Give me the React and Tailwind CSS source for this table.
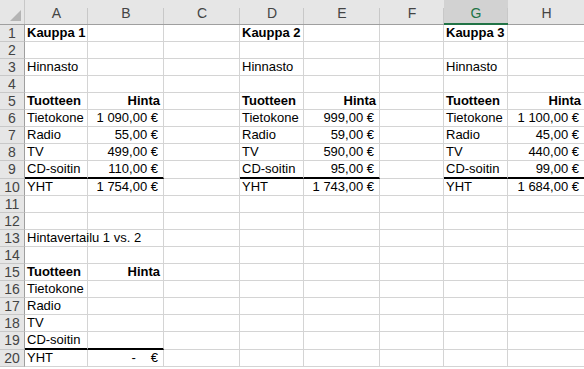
import React from "react";

const COLS = ["A", "B", "C", "D", "E", "F", "G", "H"];
const WIDTHS = ["w-[63px]", "w-[76px]", "w-[76px]", "w-[64px]", "w-[76px]", "w-[64px]", "w-[64px]", "w-[77px]"];

const store = (name, prices, total) => [
  { t: name, b: true },
  { t: "" },
  { t: "Hinnasto" },
  { t: "" },
  { t: "Tuotteen", b: true, h: "Hinta" },
  { t: "Tietokone", p: prices[0] },
  { t: "Radio", p: prices[1] },
  { t: "TV", p: prices[2] },
  { t: "CD-soitin", p: prices[3], thick: true },
  { t: "YHT", p: total },
];

const blocks = {
  0: store("Kauppa 1", ["1 090,00 €", "55,00 €", "499,00 €", "110,00 €"], "1 754,00 €"),
  3: store("Kauppa 2", ["999,00 €", "59,00 €", "590,00 €", "95,00 €"], "1 743,00 €"),
  6: store("Kauppa 3", ["1 100,00 €", "45,00 €", "440,00 €", "99,00 €"], "1 684,00 €"),
};

const compare = {
  13: { t: "Hintavertailu 1 vs. 2" },
  15: { t: "Tuotteen", b: true, h: "Hinta" },
  16: { t: "Tietokone" },
  17: { t: "Radio" },
  18: { t: "TV" },
  19: { t: "CD-soitin", thick: true },
  20: { t: "YHT", dash: true },
};

function cellFor(row, col) {
  const pair = col in blocks ? col : col - 1 in blocks ? col - 1 : null;
  if (row <= 10 && pair !== null) {
    const r = blocks[pair][row - 1];
    if (col === pair) return { text: r.t, bold: r.b, thick: r.thick };
    return { text: r.h || r.p || "", bold: !!r.h, right: true, money: !r.h && !!r.p, thick: r.thick };
  }
  if (row >= 13 && compare[row]) {
    const r = compare[row];
    if (col === 0) return { text: r.t, bold: r.b, thick: r.thick };
    if (col === 1) return { text: r.h || "", bold: !!r.h, right: true, thick: r.thick, dash: r.dash };
  }
  return { text: "" };
}

function Cell({ row, col }) {
  const c = cellFor(row, col);
  const overflow = row === 13 && col === 0;
  return (
    <div
      className={`${WIDTHS[col]} shrink-0 h-full border-r border-[#d4d4d4] flex items-center px-[2px] whitespace-nowrap ${
        c.thick ? "border-b-2 border-b-black" : "border-b"
      } ${c.right ? "justify-end" : ""} ${c.money || c.dash ? "pr-[5px]" : c.right ? "pr-[3px]" : ""} ${
        c.bold ? "font-bold" : ""
      } ${overflow ? "overflow-visible relative z-10" : "overflow-hidden"}`}
    >
      {c.dash ? (
        <span className="flex w-full justify-end">
          <span>-</span>
          <span className="ml-[15px]">€</span>
        </span>
      ) : (
        c.text
      )}
    </div>
  );
}

export default function App() {
  const rows = Array.from({ length: 20 }, (_, i) => i + 1);
  return (
    <div
      className="w-[584px] h-[369px] overflow-hidden bg-white text-black text-[13px]"
      style={{ fontFamily: '"Liberation Sans", Arial, sans-serif' }}
    >
      <div className="flex h-[25px] bg-[#e6e6e6] border-b border-[#9f9f9f]">
        <div className="w-[25px] shrink-0 border-r border-[#c8c8c8] relative">
          <svg className="absolute right-[3px] bottom-[3px]" width="11" height="11" viewBox="0 0 11 11">
            <polygon points="11,0 11,11 0,11" fill="#b4b4b4" />
          </svg>
        </div>
        {COLS.map((c, i) => (
          <div
            key={c}
            className={`${WIDTHS[i]} shrink-0 relative flex items-center justify-center pt-[2px] text-[14px] ${
              c === "G" ? "bg-[#d2d2d2] text-[#217346]" : "text-[#444]"
            }`}
          >
            {c}
            <span className="absolute right-0 top-[8px] bottom-0 w-px bg-[#c8c8c8]" />
            {c === "G" && <span className="absolute left-0 right-0 bottom-[-1px] h-[2px] bg-[#217346]" />}
          </div>
        ))}
      </div>
      {rows.map((r) => (
        <div key={r} className={`flex ${r === 9 || r === 19 ? "h-[18px]" : "h-[17px]"}`}>
          <div className="w-[25px] shrink-0 bg-[#e6e6e6] border-r border-b border-r-[#9f9f9f] border-b-[#c8c8c8] flex items-center justify-center text-[14px] text-[#444]">
            {r}
          </div>
          {COLS.map((_, i) => (
            <Cell key={i} row={r} col={i} />
          ))}
        </div>
      ))}
    </div>
  );
}
